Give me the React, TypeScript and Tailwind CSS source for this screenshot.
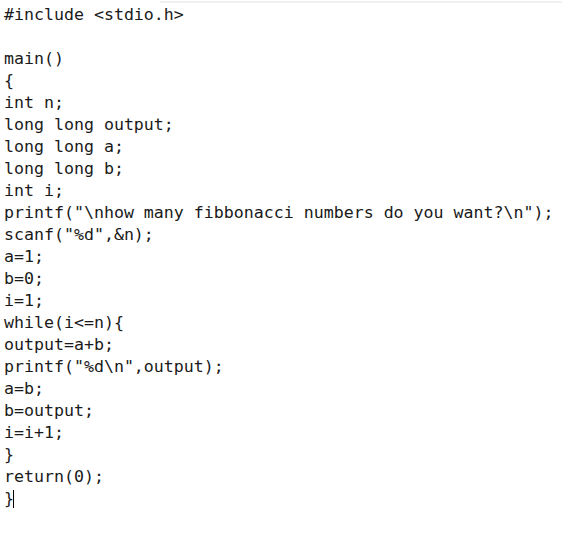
import React from 'react';

const lines = [
  '#include <stdio.h>',
  '',
  'main()',
  '{',
  'int n;',
  'long long output;',
  'long long a;',
  'long long b;',
  'int i;',
  'printf("\\nhow many fibbonacci numbers do you want?\\n");',
  'scanf("%d",&n);',
  'a=1;',
  'b=0;',
  'i=1;',
  'while(i<=n){',
  'output=a+b;',
  'printf("%d\\n",output);',
  'a=b;',
  'b=output;',
  'i=i+1;',
  '}',
  'return(0);',
];

export default function App() {
  return (
    <div className="w-[562px] h-[533px] bg-white overflow-hidden">
      <div className="mt-px ml-[160px] h-[2px] bg-[#f0f0f0]"></div>
      <pre
        className="pl-[4px] pt-[1px] text-[16.6px] leading-[22px] text-[#1a1a1a] m-0"
        style={{ fontFamily: '"DejaVu Sans Mono", "Liberation Mono", monospace' }}
      >
        {lines.map((l, i) => (
          <div key={i} className="h-[22px]">{l}</div>
        ))}
        <div className="h-[22px] flex items-center">
          <span>{'}'}</span>
          <span className="inline-block w-px h-[18px] bg-black ml-[-1px]"></span>
        </div>
      </pre>
    </div>
  );
}
